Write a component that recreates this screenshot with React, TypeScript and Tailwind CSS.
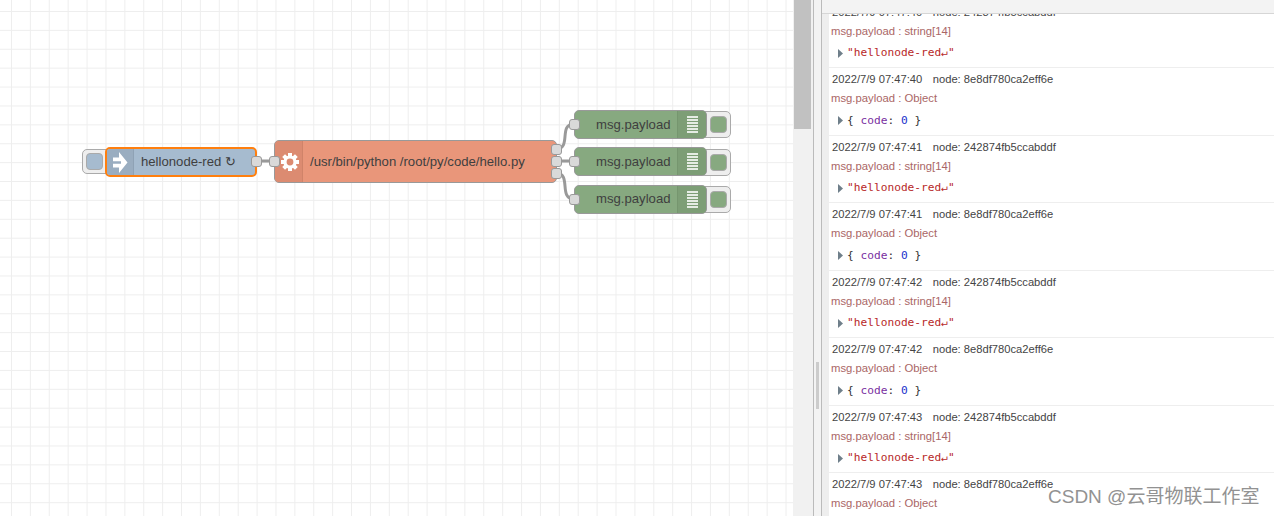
const ARIAL = "font-['Liberation_Sans',Arial,sans-serif]"

const rows = [
    { time: '2022/7/9 07:47:40', node: '242874fb5ccabddf', type: 'string[14]' },
    { time: '2022/7/9 07:47:40', node: '8e8df780ca2eff6e', type: 'Object' },
    { time: '2022/7/9 07:47:41', node: '242874fb5ccabddf', type: 'string[14]' },
    { time: '2022/7/9 07:47:41', node: '8e8df780ca2eff6e', type: 'Object' },
    { time: '2022/7/9 07:47:42', node: '242874fb5ccabddf', type: 'string[14]' },
    { time: '2022/7/9 07:47:42', node: '8e8df780ca2eff6e', type: 'Object' },
    { time: '2022/7/9 07:47:43', node: '242874fb5ccabddf', type: 'string[14]' },
    { time: '2022/7/9 07:47:43', node: '8e8df780ca2eff6e', type: 'Object' },
]

const debugNodes = [
    { id: 1, node: 'top-[110px]', button: 'top-[111px]', port: 'top-[118.5px]' },
    { id: 2, node: 'top-[147px]', button: 'top-[149px]', port: 'top-[155.5px]' },
    { id: 3, node: 'top-[184.5px]', button: 'top-[186px]', port: 'top-[193.5px]' },
]

const teeth = [0, 45, 90, 135, 180, 225, 270, 315]

const Port = ({ className }: { className: string }) => (
    <div className={`absolute w-[11px] h-[11px] rounded-[3px] bg-[#d9d9d9] border border-[#999] ${className}`} />
)

const Flow = () => (
    <>
        <svg className="absolute left-0 top-0" width="793" height="516" fill="none" stroke="#999" strokeWidth="3">
            <path d="M258 161 L272 161" />
            <path d="M556 149 C572 149 558 124 574 124" />
            <path d="M556 161 L574 161" />
            <path d="M556 173 C572 173 558 199 574 199" />
        </svg>

        {/* inject */}
        <div className="absolute left-[82px] top-[149px] w-[30px] h-[25px] flex items-center pl-[3px] bg-[#eeeeee] border border-[#aaa] rounded-[5px]">
            <div className="w-[17px] h-[17px] bg-[#a6bbcf] border border-[#aaa] rounded-[4px]" />
        </div>
        <div className="absolute left-[105px] top-[147px] w-[152px] h-[30px] flex items-center bg-[#a6bbcf] border-2 border-[#ff7f0e] rounded-[5px] overflow-hidden">
            <div className="w-[27px] h-full shrink-0 flex items-center justify-center bg-[#9aadc0] border-r border-[#8fa2b5]">
                <svg width="15" height="21" viewBox="0 0 15 21" fill="white">
                    <path d="M6 0 L14.5 10.5 L6 21 L6 15.5 L0 15.5 L0 11.7 L8 11.7 L8 9.3 L0 9.3 L0 5.5 L6 5.5 Z" />
                </svg>
            </div>
            <span className={`ml-[7px] text-[13.15px] text-[#3f3f3f] whitespace-nowrap ${ARIAL}`}>hellonode-red ↻</span>
        </div>
        <Port className="left-[250.5px] top-[155.5px]" />

        {/* exec */}
        <div className="absolute left-[274px] top-[140px] w-[283px] h-[43px] flex items-center bg-[#e9967a] border border-[#999] rounded-[5px] overflow-hidden">
            <div className="w-[28px] h-full shrink-0 flex items-center justify-center bg-[#dc8b71] border-r border-[#d08369]">
                <svg width="18" height="18" viewBox="0 0 18 18" className="ml-[3px]" fill="white">
                    {teeth.map((deg) => (
                        <rect key={deg} x="7" y="0" width="4" height="4" transform={`rotate(${deg} 9 9)`} />
                    ))}
                    <circle cx="9" cy="9" r="5" fill="none" stroke="white" strokeWidth="3.2" />
                </svg>
            </div>
            <span className={`ml-[7px] text-[13.15px] text-[#3f3f3f] whitespace-nowrap ${ARIAL}`}>/usr/bin/python /root/py/code/hello.py</span>
        </div>
        <Port className="left-[269px] top-[155.5px]" />
        <Port className="left-[550.5px] top-[143.5px]" />
        <Port className="left-[550.5px] top-[155.5px]" />
        <Port className="left-[550.5px] top-[167.5px]" />

        {/* debug */}
        {debugNodes.map((n) => (
            <div key={n.id}>
                <div className={`absolute left-[700px] w-[31px] h-[27px] flex items-center justify-end pr-[3px] bg-[#eeeeee] border border-[#aaa] rounded-[5px] ${n.button}`}>
                    <div className="w-[17px] h-[17px] bg-[#87a980] border border-[#aaa] rounded-[4px]" />
                </div>
                <div className={`absolute left-[574px] w-[133px] h-[29px] flex items-center bg-[#87a980] border border-[#999] rounded-[5px] overflow-hidden ${n.node}`}>
                    <span className={`ml-[21px] w-[81px] text-[13.15px] text-[#3f3f3f] whitespace-nowrap ${ARIAL}`}>msg.payload</span>
                    <div className="flex-1 h-full flex flex-col items-center justify-center gap-[1px] bg-[#7d9e76] border-l border-[#76966f]">
                        <div className="w-[11px] h-[2px] bg-white/80" />
                        <div className="w-[11px] h-[2px] bg-white/80" />
                        <div className="w-[11px] h-[2px] bg-white/80" />
                        <div className="w-[11px] h-[2px] bg-white/80" />
                        <div className="w-[11px] h-[2px] bg-white/80" />
                        <div className="w-[11px] h-[2px] bg-white/80" />
                    </div>
                </div>
                <Port className={`left-[568.5px] ${n.port}`} />
            </div>
        ))}
    </>
)

const DebugRow = ({ row }: { row: (typeof rows)[number] }) => (
    <div className={`h-[67.5px] shrink-0 border-b border-[#eeeeee] pl-[2px] ${ARIAL}`}>
        <div className="pt-[3px] pl-px h-[20px] leading-[17px] text-[11.2px] text-[#444] whitespace-nowrap">
            {row.time}<span className="ml-[10.5px]">node: {row.node}</span>
        </div>
        <div className="h-[20px] leading-[20px] text-[11.3px] text-[#a66] whitespace-nowrap">
            msg.payload : {row.type}
        </div>
        <div className="flex items-center h-[24px] pl-[7px] pt-[1px]">
            <svg width="5" height="9" viewBox="0 0 5 9" className="mr-[4px]">
                <path d="M0 0 L5 4.5 L0 9 Z" fill="#6f7f8a" />
            </svg>
            <span className="font-['DejaVu_Sans_Mono',monospace] text-[11.2px] leading-none whitespace-pre">
                {row.type === 'Object' ? (
                    <span className="text-[#333]">
                        {'{ '}<span className="text-[#792e9f]">code</span>: <span className="text-[#2233cc]">0</span>{' }'}
                    </span>
                ) : (
                    <span className="text-[#b72828]">"hellonode-red↵"</span>
                )}
            </span>
        </div>
    </div>
)

const App = () => {
    return (
        <div className="relative w-[1274px] h-[516px] flex overflow-hidden bg-white">
            <div className="relative w-[793px] h-full shrink-0 overflow-hidden bg-white bg-[linear-gradient(#eeeeee_1px,transparent_1px),linear-gradient(90deg,#eeeeee_1px,transparent_1px)] bg-[size:18.9px_18.9px] bg-[position:11px_11px]">
                <Flow />
            </div>

            {/* canvas scrollbar */}
            <div className="w-[20px] h-full shrink-0 bg-[#f1f1f1] pl-px pr-[2px]">
                <div className="w-[17px] h-[129px] bg-[#c1c1c1]" />
            </div>

            {/* sidebar separator */}
            <div className="w-[9px] h-full shrink-0 flex items-center justify-center bg-[#f3f3f3] border-x border-[#bbbbbb]">
                <div className="w-[3px] h-[47px] mt-[255px] bg-[#cccccc]" />
            </div>

            {/* debug panel */}
            <div className="flex-1 h-full min-w-0 flex flex-col">
                <div className="h-[14px] shrink-0 bg-[#f3f3f3] border-b border-[#d6d6d6]" />
                <div className="flex-1 min-h-0 flex overflow-hidden">
                    <div className="w-[7px] shrink-0 bg-[#eeeeee]" />
                    <div className="flex-1 flex flex-col -mt-[13.5px]">
                        {rows.map((row, i) => (
                            <DebugRow key={i} row={row} />
                        ))}
                    </div>
                </div>
            </div>

            <div className="absolute left-[1048px] top-[484px] text-[19px] leading-[26px] text-[#929292] whitespace-nowrap font-['Liberation_Sans','Noto_Sans_CJK_SC',sans-serif]">
                CSDN @云哥物联工作室
            </div>
        </div>
    )
}

export default App
